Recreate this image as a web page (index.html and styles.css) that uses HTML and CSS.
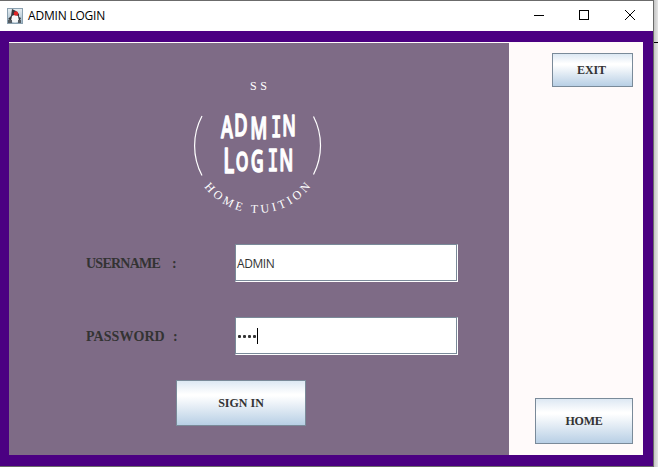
FILE: index.html
```html
<!DOCTYPE html>
<html lang="en">
<head>
<meta charset="utf-8">
<title>ADMIN LOGIN</title>
<link rel="stylesheet" href="styles.css">
</head>
<body>
<div class="window">
  <header class="titlebar">
    <svg class="app-icon" width="16" height="16" viewBox="0 0 16 16">
      <defs><linearGradient id="tile" x2="0" y2="1"><stop stop-color="#e9eff3"/><stop offset="1" stop-color="#9db7c8"/></linearGradient></defs>
      <rect x=".5" y=".5" width="15" height="15" fill="url(#tile)" stroke="#8ba1b0"/>
      <path d="M5 1L9 3L12 6L12 9L14 10L13 12H3L1 11L4 8Z" fill="#34383d"/>
      <path d="M5 8Q8 6 11 8L12 13Q8 16 4 13Z" fill="#f6f7f8"/>
      <path d="M1 12H5V15H1M11 12H14V15H11" fill="#555c62"/>
      <circle cx="9" cy="5.500" r="2.200" fill="#df2525"/>
    </svg>
    <h1 class="title">ADMIN LOGIN</h1>
    <div class="controls">
      <svg width="10" height="10" viewBox="0 0 10 10"><path d="M0 5.5H10"/></svg>
      <svg width="10" height="10" viewBox="0 0 10 10"><rect x=".5" y=".5" width="9" height="9"/></svg>
      <svg width="10" height="10" viewBox="0 0 10 10"><path d="M0 0L10 10M10 0L0 10"/></svg>
    </div>
  </header>
  <div class="frame">
    <main class="login">
      <svg class="logo" width="140" height="146" viewBox="188 74 140 146">
        <defs><path id="curve" d="M190.500 146 A67 67 0 0 0 324.500 146"/></defs>
        <text class="serif" x="250" y="89.500" font-size="12" textLength="17">SS</text>
        <path class="ring" d="M202 116 A63.500 63.500 0 0 0 202 175.500M313.500 116.500 A63.500 63.500 0 0 1 313.500 174.500"/>
        <text class="brush" transform="scale(.6 1)"><tspan x="368.500" y="138.500" font-size="30">A</tspan><tspan x="390" y="136.500" font-size="31">D</tspan><tspan x="417" y="139.500" font-size="31">M</tspan><tspan class="slab" x="451.500" y="137" font-size="29">I</tspan><tspan x="470.500" y="136" font-size="29">N</tspan></text>
        <text class="brush" transform="scale(.6 1)"><tspan x="372" y="173" font-size="34">L</tspan><tspan x="393" y="171.500" font-size="27">O</tspan><tspan x="418" y="172.500" font-size="30">G</tspan><tspan class="slab" x="446" y="171" font-size="30">I</tspan><tspan x="465.500" y="171.500" font-size="30">N</tspan></text>
        <text class="serif" font-size="12"><textPath href="#curve" startOffset="43.500" textLength="123">HOME TUITION</textPath></text>
      </svg>
      <form class="form">
        <div class="row">
          <span class="label username">USERNAME</span><span class="label">:</span>
          <div class="field">ADMIN</div>
        </div>
        <div class="row">
          <span class="label password">PASSWORD</span><span class="label">:</span>
          <div class="field"><i class="dot"></i><i class="dot"></i><i class="dot"></i><i class="dot"></i><i class="caret"></i></div>
        </div>
        <button type="button" class="button signin">SIGN IN</button>
      </form>
    </main>
    <aside class="side">
      <button type="button" class="button exit">EXIT</button>
      <button type="button" class="button home">HOME</button>
    </aside>
  </div>
</div>
<div class="backdrop"><div class="line"></div></div>
</body>
</html>
```
FILE: styles.css
```css
* { box-sizing: border-box; }
body {
  margin: 0;
  width: 658px;
  height: 467px;
  overflow: hidden;
  display: flex;
  font-family: "Open Sans", sans-serif;
}
.window {
  width: 654px;
  height: 467px;
  border: solid #6b6b6b;
  border-width: 1px 1px 1px 0;
  display: flex;
  flex-direction: column;
  background: #4b0082;
}
.titlebar {
  height: 30px;
  background: #fff;
  display: flex;
  align-items: center;
  padding: 0 18px 0 7px;
}
.title {
  flex: 1;
  margin: -1px 0 0 5px;
  font-size: 12px;
  font-weight: 400;
  letter-spacing: -.2px;
  color: #000;
}
.controls { display: flex; gap: 35px; margin: -2px 1px 0 0; }
.controls svg { fill: none; stroke: #000; stroke-width: 1; display: block; }
.controls svg:last-child { margin-left: 1px; margin-right: -1px; }
.frame {
  flex: 1;
  display: flex;
  margin: 11px 10px 11px 9px;
  border-top: 1px solid #fffafa;
  background: #fffafa;
}
.login { width: 500px; background: #7e6b86; }
.logo { display: block; margin: 31px 0 0 179px; }
.serif { font-family: "Liberation Serif", serif; fill: #fff; }
.brush {
  font-family: "Open Sans", sans-serif;
  font-weight: 600;
  fill: #fff;
  stroke: #fff;
  stroke-width: 1.4;
  stroke-linejoin: round;
}
.slab { font-family: "DejaVu Sans Mono", monospace; font-weight: 400; }
.ring { fill: none; stroke: #fff; stroke-width: 1.2; }
.form { margin: 24px 0 0 77px; }
.row {
  display: flex;
  align-items: center;
  height: 38px;
  width: 372px;
  margin-bottom: 35px;
}
.row + .row { margin-bottom: 25px; }
.label {
  padding-top: 2px;
  font: bold 14px "Liberation Serif", serif;
  color: #333;
  white-space: nowrap;
}
.username { width: 86px; letter-spacing: -.75px; }
.password { width: 87px; letter-spacing: .05px; }
.field {
  width: 223px;
  height: 38px;
  margin-left: auto;
  padding: 0 1px;
  display: flex;
  align-items: center;
  background: #fff;
  border: 1px solid #7a8a99;
  border-right-color: #fff;
  border-bottom-color: #fff;
  box-shadow: inset -1px -1px #7a8a99;
  font-size: 12px;
  letter-spacing: -.45px;
  color: #333;
}
.dot { width: 3px; height: 3px; margin: 1px 1px 0; border-radius: 1px; background: #333; }
.caret { width: 1px; height: 16px; background: #000; }
.button {
  display: block;
  padding: 0;
  border: 1px solid #7a8a99;
  background: linear-gradient(#dde8f3, #fff 30%, #fff 34%, #b8cfe5);
  color: #333;
  font: bold 12px "Liberation Serif", serif;
}
.signin { width: 130px; height: 46px; margin-left: 90px; }
.side {
  flex: 1;
  display: flex;
  flex-direction: column;
  align-items: flex-end;
  justify-content: space-between;
  padding: 10px 10px 11px;
}
.exit { width: 81px; height: 34px; padding-right: 2px; letter-spacing: -.1px; }
.home { width: 98px; height: 46px; letter-spacing: -.2px; }
.backdrop { flex: 1; background: linear-gradient(90deg, #c4c4c4, #e5e5e5); }
.line { height: 1px; margin-top: 42px; background: #000; }
```
